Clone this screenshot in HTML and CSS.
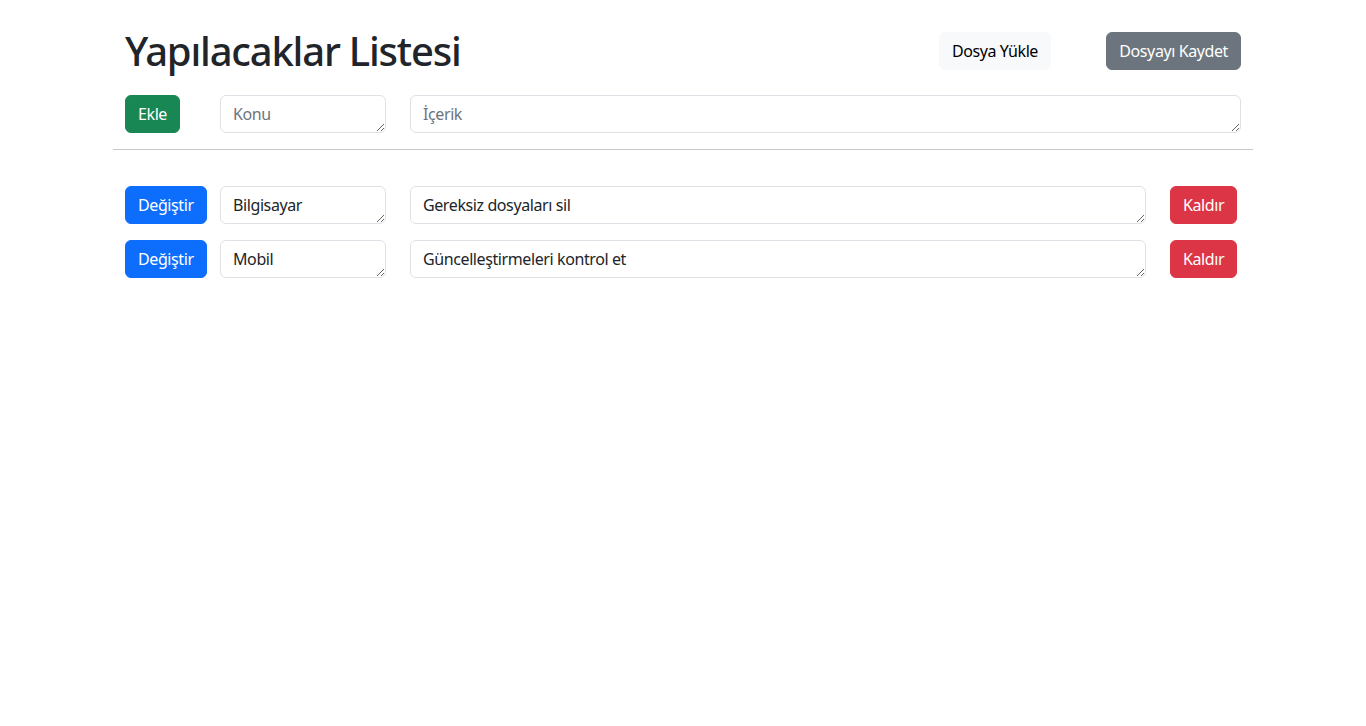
FILE: index.html
```html
<!DOCTYPE html>
<html lang="tr">
<head>
<meta charset="utf-8">
<title>Yapılacaklar Listesi</title>
<link rel="stylesheet" href="styles.css">
</head>
<body>
<div class="container">
  <div class="row header-row">
    <div class="col col-8"><h1 class="title">Yapılacaklar Listesi</h1></div>
    <div class="col col-2 end"><button class="btn btn-light">Dosya Yükle</button></div>
    <div class="col col-2 end"><button class="btn btn-secondary">Dosyayı Kaydet</button></div>
  </div>
  <div class="row add-row">
    <div class="col col-1"><button class="btn btn-success">Ekle</button></div>
    <div class="col col-2"><textarea class="form-control" rows="1" placeholder="Konu"></textarea></div>
    <div class="col col-9"><textarea class="form-control" rows="1" placeholder="İçerik"></textarea></div>
  </div>
  <hr class="divider">
  <div class="list">
    <div class="row item-row">
      <div class="col col-1"><button class="btn btn-primary">Değiştir</button></div>
      <div class="col col-2"><textarea class="form-control" rows="1">Bilgisayar</textarea></div>
      <div class="col col-8"><textarea class="form-control" rows="1">Gereksiz dosyaları sil</textarea></div>
      <div class="col col-1"><button class="btn btn-danger">Kaldır</button></div>
    </div>
    <div class="row item-row">
      <div class="col col-1"><button class="btn btn-primary">Değiştir</button></div>
      <div class="col col-2"><textarea class="form-control" rows="1">Mobil</textarea></div>
      <div class="col col-8"><textarea class="form-control" rows="1">Güncelleştirmeleri kontrol et</textarea></div>
      <div class="col col-1"><button class="btn btn-danger">Kaldır</button></div>
    </div>
  </div>
</div>
</body>
</html>
```

FILE: styles.css
```css
* { box-sizing: border-box; }
html, body { margin: 0; padding: 0; }
body {
  font-family: "Noto Sans", "Open Sans", sans-serif;
  font-size: 16px;
  line-height: 1.5;
  letter-spacing: -0.4px;
  color: #212529;
  background: #fff;
}
.container {
  width: 1140px;
  margin: 0 auto;
  padding-top: 27px;
}
.row {
  display: grid;
  grid-template-columns: repeat(12, 95px);
  align-items: center;
}
.col { padding: 0 12px; min-width: 0; }
.col-1 { grid-column: span 1; }
.col-2 { grid-column: span 2; }
.col-8 { grid-column: span 8; }
.col-9 { grid-column: span 9; }
.end { display: flex; justify-content: flex-end; }
.title {
  margin: 0;
  font-size: 40px;
  font-weight: 500;
  line-height: 48px;
  letter-spacing: -1.2px;
  white-space: nowrap;
}
.add-row { margin-top: 20px; }
.divider {
  margin: 16px 0;
  border: 0;
  border-top: 1px solid #212529;
  opacity: .25;
}
.list { padding-top: 20px; display: flex; flex-direction: column; gap: 16px; }
.btn {
  display: inline-block;
  font-family: inherit;
  font-size: 16px;
  line-height: 24px;
  letter-spacing: -0.4px;
  padding: 6px 12px;
  border: 1px solid transparent;
  border-radius: 6px;
  white-space: nowrap;
  cursor: pointer;
}
.btn-light { background: #f8f9fa; border-color: #f8f9fa; color: #000; }
.btn-secondary { background: #6c757d; border-color: #6c757d; color: #fff; }
.btn-success { background: #198754; border-color: #198754; color: #fff; }
.btn-primary { background: #0d6efd; border-color: #0d6efd; color: #fff; }
.btn-danger { background: #dc3545; border-color: #dc3545; color: #fff; }
.form-control {
  display: block;
  width: 100%;
  height: 38px;
  min-height: 38px;
  padding: 6px 12px;
  font-family: inherit;
  font-size: 16px;
  line-height: 24px;
  letter-spacing: -0.4px;
  color: #212529;
  background: #fff;
  border: 1px solid #dee2e6;
  border-radius: 6px;
  resize: vertical;
  overflow: hidden;
}
.form-control::placeholder { color: #6c757d; opacity: 1; }
```
